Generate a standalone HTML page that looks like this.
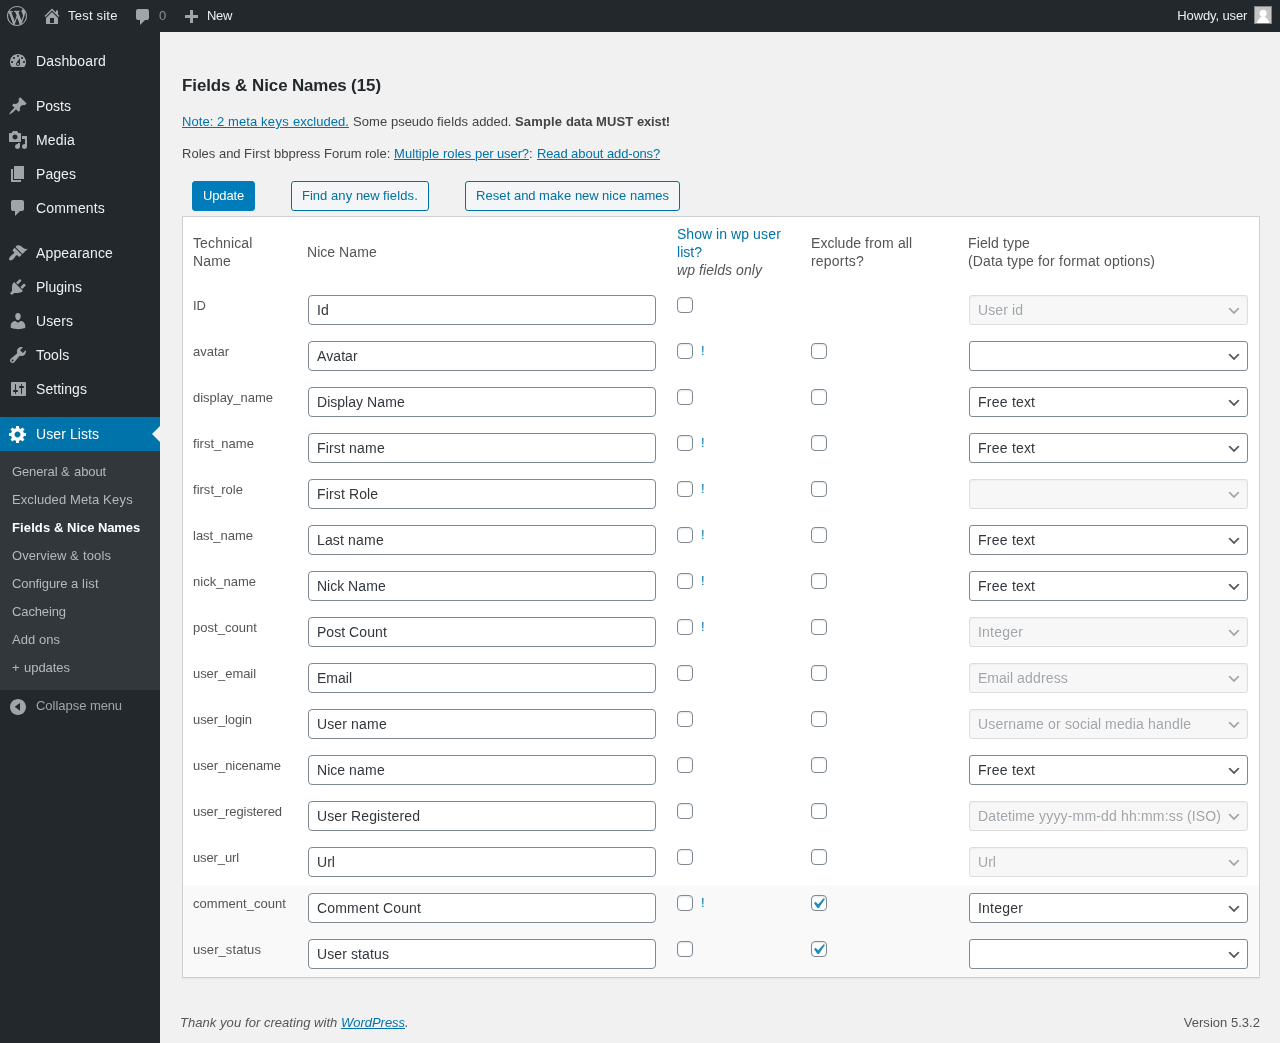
<!DOCTYPE html><html lang="en"><head><meta charset="utf-8"><title>Fields &amp; Nice Names</title><style>
*{box-sizing:border-box}
html,body{margin:0;padding:0}
body{width:1280px;height:1043px;position:relative;overflow:hidden;background:#f1f1f1;color:#444;font-family:"Liberation Sans",Arial,sans-serif;font-size:13px;line-height:1.4em}
a{color:#0073aa;text-decoration:underline}
.ico{display:block;fill:currentColor}
#bar,#menu,#content,#foot{will-change:transform}
#bar{position:absolute;left:0;top:0;width:1280px;height:32px;background:#23282d;color:#eee;font-size:13px;line-height:32px;z-index:5}
#bar .it{position:absolute;top:0;height:32px;white-space:nowrap}
#bar .ico{position:absolute;color:#a0a5aa}
#menu{position:absolute;left:0;top:32px;width:160px;height:1011px;background:#23282d}
#menu ul{list-style:none;margin:12px 0 0;padding:0}
#menu li.top{height:34px;position:relative;color:#eee;font-size:14px;line-height:18px}
#menu li.top .ico{position:absolute;left:8px;top:7px;color:#a0a5aa}
#menu li.top .nm{position:absolute;left:36px;top:8px;white-space:nowrap}
#menu li.sep{height:5px;margin:0 0 6px}
#menu li.cur{background:#0073aa;color:#fff}
#menu li.cur .ico{color:#fff}
#menu li.cur:after{content:"";position:absolute;right:0;top:9px;border:8px solid transparent;border-right-color:#f1f1f1}
#menu .sub{background:#32373c;padding:7px 0 8px;margin:0}
#menu .sub li{height:28px;padding:5px 12px;font-size:13px;line-height:18px;color:#b4b9be;white-space:nowrap}
#menu .sub li.on{color:#fff;font-weight:bold}
#collapse{position:relative;height:34px;color:#a0a5aa;font-size:13px;line-height:34px}
#collapse .ico{position:absolute;left:8px;top:7px}
#collapse>span{position:absolute;left:36px;top:-1px;white-space:nowrap}
#content{position:absolute;left:182px;top:32px;width:1078px}
h2{position:absolute;left:0;top:43px;margin:0;font-size:16.9px;line-height:22px;color:#23282d;font-weight:bold;white-space:nowrap}
p.l{position:absolute;left:0;margin:0;font-size:13px;line-height:20px;white-space:nowrap}
.btn{position:absolute;top:149px;height:30px;text-align:center;border:1px solid #0071a1;border-radius:3px;background:#f3f5f6;color:#0071a1;font-size:13px;line-height:28px;padding:0;white-space:nowrap}
.btn.pri{background:#007cba;border-color:#007cba;color:#fff}
table{position:absolute;left:0;top:184px;width:1078px;border:1px solid #ccd0d4;background:#fff;border-spacing:0;box-shadow:0 1px 1px rgba(0,0,0,.04);table-layout:fixed}
th,td{padding:8px 10px;text-align:left}
th{font-size:14px;line-height:18px;font-weight:normal;color:#555;vertical-align:middle;height:70px}
th .b{color:#0073aa}
th i{font-size:14px}
td{font-size:13px;line-height:19.5px;vertical-align:top;height:46px;color:#555}
td:first-child{padding-top:9px}
tr.alt td{background:#f9f9f9}
.inp{margin:0 1px;height:30px;width:348px;border:1px solid #7e8993;border-radius:4px;background:#fff;color:#32373c;font-size:14px;line-height:28px;padding:0 8px}
.cb{display:inline-block;vertical-align:top;width:16px;height:16px;border:1px solid #7e8993;border-radius:4px;background:#fff;box-shadow:inset 0 1px 2px rgba(0,0,0,.1);margin:2px 4px 0 0;position:relative}
.cb svg{position:absolute;left:-4px;top:-3px;width:21px;height:21px}
.bang{color:#0073aa;display:inline-block;margin-left:4px;text-decoration:none}
.sel{margin:0 1px;height:30px;width:279px;border:1px solid #7e8993;border-radius:3px;background:#fff;color:#32373c;font-size:14px;line-height:28px;padding:0 24px 0 8px;position:relative;white-space:nowrap;overflow:hidden}
.sel svg{position:absolute;right:5px;top:7px;width:16px;height:16px;fill:#555}
.sel.dis{color:#a0a5aa;border-color:#ddd;background:#f7f7f7;box-shadow:inset 0 1px 2px rgba(0,0,0,.04);text-shadow:0 1px 0 #fff}
.sel.dis svg{fill:#a0a5aa}
#foot{position:absolute;left:180px;top:1013px;width:1080px;font-size:13px;line-height:20px;color:#555}
#foot i{position:absolute;left:0;top:0}
#foot .ver{position:absolute;right:0;top:0}
</style></head><body>
<div id="bar">
<svg class="ico" style="left:7px;top:6px" viewBox="0 0 20 20" width="20" height="20"><path d="M20 10c0-5.51-4.49-10-10-10C4.48 0 0 4.49 0 10c0 5.52 4.48 10 10 10 5.51 0 10-4.48 10-10zM7.78 15.37L4.37 6.22c.55-.02 1.17-.08 1.17-.08.5-.06.44-1.13-.06-1.11 0 0-1.45.11-2.37.11-.18 0-.37 0-.58-.01C4.12 2.69 6.87 1.11 10 1.11c2.33 0 4.45.87 6.05 2.34-.68-.11-1.65.39-1.65 1.58 0 .74.45 1.36.9 2.1.35.61.55 1.36.55 2.46 0 1.49-1.4 5-1.4 5l-3.03-8.37c.54-.02.82-.17.82-.17.5-.05.44-1.25-.06-1.22 0 0-1.44.12-2.38.12-.87 0-2.33-.12-2.33-.12-.5-.03-.56 1.2-.06 1.22l.92.08 1.26 3.41zM17.41 10c.24-.64.74-1.87.43-4.25.7 1.29 1.05 2.71 1.05 4.25 0 3.29-1.73 6.24-4.4 7.78.97-2.59 1.94-5.2 2.92-7.780zM6.1 18.09C3.12 16.65 1.11 13.53 1.11 10c0-1.3.23-2.48.72-3.59C3.25 10.3 4.67 14.2 6.1 18.09zm4.03-6.63l2.58 6.98c-.86.29-1.76.45-2.71.45-.79 0-1.57-.11-2.29-.33.81-2.38 1.62-4.74 2.42-7.1z"/></svg>
<svg class="ico" style="left:42px;top:6px" viewBox="0 0 20 20" width="20" height="20"><path d="M16 8.5l1.53 1.53-1.06 1.06L10 4.62l-6.47 6.47-1.06-1.06L10 2.5l4 4v-2h2v4zm-6-2.46l6 5.99V18H4v-5.970zM12 17v-5H8v5h4z"/></svg>
<span class="it" style="left:68px"><span style="letter-spacing:0.222px">Test </span><span style="letter-spacing:0.191px">site</span></span>
<svg class="ico" style="left:133px;top:7px" viewBox="0 0 20 20" width="20" height="20"><path d="M5 2h9c1.1 0 2 .9 2 2v7c0 1.1-.9 2-2 2h-2l-5 5v-5H5c-1.1 0-2-.9-2-2V4c0-1.1.9-2 2-2z"/></svg>
<span class="it" style="letter-spacing:-0.234px;left:159px;opacity:.5">0</span>
<svg class="ico" style="left:181px;top:8px" viewBox="0 0 20 20" width="20" height="20"><path d="M17 7v3h-5v5H9v-5H4V7h5V2h3v5h5z"/></svg>
<span class="it" style="letter-spacing:-0.339px;left:207px">New</span>
<span class="it" style="letter-spacing:-0.115px;left:1177.3px">Howdy, user</span>
<svg style="position:absolute;left:1254px;top:6px" width="18" height="18" viewBox="0 0 18 18"><rect width="18" height="18" fill="#82878c"/><rect x="1" y="1" width="16" height="16" fill="#c5c5c5"/><circle cx="9.1" cy="7.3" r="3.6" fill="#fff"/><path d="M2.900 17c.9-3.800 3.100-6.300 6.200-6.300s5.300 2.500 6.200 6.300z" fill="#fff"/></svg>
</div>
<div id="menu"><ul>
<li class="top"><svg class="ico " viewBox="0 0 20 20" width="20" height="20"><path d="M3.76 16h12.48c1.1-1.37 1.76-3.11 1.76-5 0-4.42-3.58-8-8-8s-8 3.58-8 8c0 1.89.66 3.63 1.76 5zM10 4c.55 0 1 .45 1 1s-.45 1-1 1-1-.45-1-1 .45-1 1-1zM6 6c.55 0 1 .45 1 1s-.45 1-1 1-1-.45-1-1 .45-1 1-1zm8 0c.55 0 1 .45 1 1s-.45 1-1 1-1-.45-1-1 .45-1 1-1zm-5.37 5.55L12 7v6c0 1.1-.9 2-2 2s-2-.9-2-2c0-.57.24-1.08.63-1.45zM4 10c.55 0 1 .45 1 1s-.45 1-1 1-1-.45-1-1 .45-1 1-1zm12 0c.55 0 1 .45 1 1s-.45 1-1 1-1-.45-1-1 .45-1 1-1zm-5 3c0-.55-.45-1-1-1s-1 .45-1 1 .45 1 1 1 1-.45 1-1z"/></svg><span class="nm" style="letter-spacing:0.172px">Dashboard</span></li>
<li class="sep"></li>
<li class="top"><svg class="ico " viewBox="0 0 20 20" width="20" height="20"><path d="M10.44 3.02l1.82-1.82 6.36 6.35-1.83 1.82c-1.05-.68-2.48-.57-3.41.36l-.75.75c-.92.93-1.04 2.35-.35 3.41l-1.83 1.82-2.41-2.41-2.8 2.79c-.42.42-3.38 2.71-3.8 2.29s1.86-3.39 2.28-3.81l2.79-2.79L4.1 9.36l1.83-1.82c1.05.69 2.48.57 3.4-.36l.75-.75c.93-.92 1.05-2.35.36-3.41z"/></svg><span class="nm" style="letter-spacing:-0.003px">Posts</span></li>
<li class="top"><svg class="ico " viewBox="0 0 20 20" width="20" height="20"><path d="M13 11V4c0-.55-.45-1-1-1h-1.67L9 1H5L3.67 3H2c-.55 0-1 .45-1 1v7c0 .55.45 1 1 1h10c.55 0 1-.45 1-1zM7 4.5c1.38 0 2.5 1.12 2.5 2.5S8.38 9.5 7 9.5 4.5 8.38 4.5 7 5.62 4.5 7 4.5zM14 6h5v10.5c0 1.38-1.12 2.5-2.5 2.5S14 17.88 14 16.5s1.12-2.5 2.5-2.5c.17 0 .34.02.5.05V9h-3V6zm-4 8.05V13h2v3.5c0 1.38-1.12 2.5-2.5 2.5S7 17.88 7 16.5 8.12 14 9.5 14c.17 0 .34.02.5.05z"/></svg><span class="nm" style="letter-spacing:0.178px">Media</span></li>
<li class="top"><svg class="ico " viewBox="0 0 20 20" width="20" height="20"><path d="M6 15V2h10v13H6zm-1 1h8v2H3V5h2v11z"/></svg><span class="nm" style="letter-spacing:0.062px">Pages</span></li>
<li class="top"><svg class="ico " viewBox="0 0 20 20" width="20" height="20"><path d="M5 2h9c1.1 0 2 .9 2 2v7c0 1.1-.9 2-2 2h-2l-5 5v-5H5c-1.1 0-2-.9-2-2V4c0-1.1.9-2 2-2z"/></svg><span class="nm" style="letter-spacing:0.168px">Comments</span></li>
<li class="sep"></li>
<li class="top"><svg class="ico " viewBox="0 0 20 20" width="20" height="20"><path d="M14.48 11.06L7.41 3.99l1.5-1.5c.5-.56 2.3-.47 3.51.32 1.21.8 1.43 1.28 2.91 2.1 1.18.64 2.45 1.26 4.45.85zm-.71.71L6.7 4.7 4.93 6.47c-.39.39-.39 1.02 0 1.41l1.06 1.06c.39.39.39 1.03 0 1.42-.6.6-1.43 1.11-2.21 1.69-.35.26-.7.53-1.01.84C1.43 14.23.4 16.08 1.4 17.07c.99 1 2.84-.03 4.18-1.36.31-.31.58-.66.85-1.02.57-.78 1.08-1.61 1.69-2.21.39-.39 1.02-.39 1.41 0l1.06 1.06c.39.39 1.02.39 1.41 0z"/></svg><span class="nm" style="letter-spacing:0.153px">Appearance</span></li>
<li class="top"><svg class="ico " viewBox="0 0 20 20" width="20" height="20"><path d="M13.11 4.36L9.87 7.6 8 5.73l3.24-3.24c.35-.34 1.05-.2 1.56.32.52.51.66 1.21.31 1.55zm-8 1.77l.91-1.12 9.01 9.01-1.19.84c-.71.71-2.63 1.16-3.82 1.16H6.14L4.9 17.26c-.59.59-1.54.59-2.12 0-.59-.58-.59-1.53 0-2.12L4 13.9v-3.88c0-1.190.4-3.180 1.110-3.890zm7.260 3.970l3.240-3.240c.34-.35 1.040-.21 1.550.31.52.51.66 1.21.31 1.55l-3.240 3.250z"/></svg><span class="nm" style="letter-spacing:0.013px">Plugins</span></li>
<li class="top"><svg class="ico " viewBox="0 0 20 20" width="20" height="20"><path d="M10 9.25c-2.27 0-2.73-3.44-2.73-3.44C7 4.02 7.82 2 9.97 2c2.16 0 2.98 2.02 2.71 3.81 0 0-.41 3.44-2.68 3.44zm0 2.57L12.72 10c2.39 0 4.52 2.33 4.52 4.53v2.49s-3.65 1.13-7.24 1.13c-3.65 0-7.24-1.13-7.24-1.13v-2.49c0-2.25 1.94-4.48 4.47-4.48z"/></svg><span class="nm" style="letter-spacing:0.091px">Users</span></li>
<li class="top"><svg class="ico " viewBox="0 0 20 20" width="20" height="20"><path d="M16.68 9.77c-1.34 1.34-3.3 1.67-4.95.99l-5.41 6.52c-.99.99-2.59.99-3.58 0s-.99-2.59 0-3.57l6.52-5.42c-.68-1.65-.35-3.61.99-4.95 1.28-1.28 3.12-1.62 4.72-1.06l-2.89 2.89 2.82 2.82 2.86-2.87c.53 1.58.18 3.39-1.08 4.65zM3.81 16.21c.4.39 1.04.39 1.43 0 .4-.4.4-1.04 0-1.43-.39-.4-1.03-.4-1.43 0-.39.39-.39 1.03 0 1.43z"/></svg><span class="nm" style="letter-spacing:0.156px">Tools</span></li>
<li class="top"><svg class="ico " viewBox="0 0 20 20" width="20" height="20"><path d="M18 16V4c0-.55-.45-1-1-1H4c-.55 0-1 .45-1 1v12c0 .55.45 1 1 1h13c.55 0 1-.45 1-1zM8 11h1c.55 0 1 .45 1 1s-.45 1-1 1H8v1.5c0 .28-.22.5-.5.5s-.5-.22-.5-.5V13H6c-.55 0-1-.45-1-1s.45-1 1-1h1V5.500c0-.28.22-.5.5-.5s.5.22.5.5V11zm5-2h-1c-.55 0-1-.45-1-1s.45-1 1-1h1V5.500c0-.28.22-.5.5-.5s.5.22.5.5V7h1c.55 0 1 .45 1 1s-.45 1-1 1h-1v5.500c0 .28-.22.5-.5.5s-.5-.22-.5-.5V9z"/></svg><span class="nm" style="letter-spacing:0.053px">Settings</span></li>
<li class="sep"></li>
<li class="top cur"><svg class="ico " viewBox="0 0 20 20" width="20" height="20"><path d="M18 12h-2.18c-.17.7-.44 1.35-.81 1.93l1.54 1.54-2.1 2.1-1.54-1.54c-.58.36-1.23.63-1.91.79V19H8v-2.180c-.68-.16-1.33-.43-1.91-.79l-1.54 1.54-2.12-2.12 1.54-1.54c-.36-.58-.63-1.23-.79-1.91H1V9.030h2.170c.16-.7.44-1.35.8-1.94L2.430 5.550l2.100-2.100 1.540 1.540c.58-.37 1.240-.64 1.930-.81V2h3v2.180c.68.16 1.330.43 1.910.79l1.540-1.540 2.120 2.120-1.540 1.540c.36.59.64 1.240.8 1.940H18V12zm-8.500 1.500c1.660 0 3-1.340 3-3s-1.340-3-3-3-3 1.340-3 3 1.340 3 3 3z"/></svg><span class="nm"><span style="letter-spacing:0.113px">User </span><span style="letter-spacing:0.044px">Lists</span></span></li>
<li><ul class="sub">
<li><span style="letter-spacing:-0.109px">General </span><span style="letter-spacing:0.359px">&amp; </span><span style="letter-spacing:-0.109px">about</span></li>
<li><span style="letter-spacing:0.099px">Excluded </span><span style="letter-spacing:0.097px">Meta </span><span style="letter-spacing:0.273px">Keys</span></li>
<li class="on"><span style="letter-spacing:0.118px">Fields </span><span style="letter-spacing:0.000px">&amp; </span><span style="letter-spacing:-0.016px">Nice </span><span style="letter-spacing:-0.131px">Names</span></li>
<li><span style="letter-spacing:0.023px">Overview </span><span style="letter-spacing:0.359px">&amp; </span><span style="letter-spacing:0.106px">tools</span></li>
<li><span style="letter-spacing:-0.100px">Configure </span><span style="letter-spacing:0.078px">a </span><span style="letter-spacing:0.277px">list</span></li>
<li style="letter-spacing:-0.119px">Cacheing</li>
<li><span style="letter-spacing:0.062px">Add </span><span style="letter-spacing:0.010px">ons</span></li>
<li><span style="letter-spacing:0.398px">+ </span><span style="letter-spacing:-0.040px">updates</span></li>
</ul></li>
<li id="collapse"><svg class="ico " viewBox="0 0 20 20" width="20" height="20"><path d="M10 2c4.42 0 8 3.58 8 8s-3.58 8-8 8-8-3.58-8-8 3.58-8 8-8zm2 11.650V5.900L6.700 9.780z"/></svg><span><span style="letter-spacing:-0.024px">Collapse </span><span style="letter-spacing:-0.133px">menu</span></span></li>
</ul></div>
<div id="content">
<h2><span style="letter-spacing:-0.067px">Fields </span><span style="letter-spacing:0.055px">&amp; </span><span style="letter-spacing:-0.072px">Nice </span><span style="letter-spacing:-0.180px">Names </span><span style="letter-spacing:-0.008px">(15)</span></h2>
<p class="l" style="top:80px"><a><span style="letter-spacing:0.052px">Note: </span><span style="letter-spacing:0.078px">2 </span><span style="letter-spacing:0.097px">meta </span><span style="letter-spacing:0.331px">keys </span><span style="letter-spacing:0.036px">excluded.</span></a><span><span style="letter-spacing:0.391px"> </span><span style="letter-spacing:0.084px">Some </span><span style="letter-spacing:-0.040px">pseudo </span><span style="letter-spacing:0.147px">fields </span><span style="letter-spacing:-0.056px">added. </span></span><b><span style="letter-spacing:0.163px">Sample </span><span style="letter-spacing:-0.069px">data </span><span style="letter-spacing:0.113px">MUST </span><span style="letter-spacing:-0.161px">exist!</span></b></p>
<p class="l" style="top:112px"><span><span style="letter-spacing:0.023px">Roles </span><span style="letter-spacing:-0.078px">and </span><span style="letter-spacing:0.188px">First </span><span style="letter-spacing:0.016px">bbpress </span><span style="letter-spacing:-0.029px">Forum </span><span style="letter-spacing:0.016px">role: </span></span><a><span style="letter-spacing:0.064px">Multiple </span><span style="letter-spacing:0.034px">roles </span><span style="letter-spacing:-0.102px">per </span><span style="letter-spacing:-0.106px">user?</span></a><span style="letter-spacing:0.391px">: </span><a><span style="letter-spacing:-0.141px">Read </span><span style="letter-spacing:-0.026px">about </span><span style="letter-spacing:-0.154px">add-ons?</span></a></p>
<span class="btn pri" style="letter-spacing:-0.156px;left:10px;width:63px">Update</span><span class="btn" style="left:109px;width:138px"><span style="letter-spacing:0.019px">Find </span><span style="letter-spacing:0.105px">any </span><span style="letter-spacing:-0.117px">new </span><span style="letter-spacing:0.147px">fields.</span></span><span class="btn" style="left:283px;width:215px"><span style="letter-spacing:0.070px">Reset </span><span style="letter-spacing:-0.078px">and </span><span style="letter-spacing:0.119px">make </span><span style="letter-spacing:-0.117px">new </span><span style="letter-spacing:0.106px">nice </span><span style="letter-spacing:-0.006px">names</span></span>
<table><colgroup><col style="width:114px"><col style="width:370px"><col style="width:134px"><col style="width:157px"><col style="width:301px"></colgroup>
<tr><th><span style="letter-spacing:0.123px">Technical</span><br><span style="letter-spacing:0.168px">Name</span></th><th><span><span style="letter-spacing:0.022px">Nice </span><span style="letter-spacing:0.168px">Name</span></span></th><th><span class="b"><span style="letter-spacing:0.019px">Show </span><span style="letter-spacing:0.073px">in </span><span style="letter-spacing:0.073px">wp </span><span style="letter-spacing:0.195px">user</span></span><br><span class="b" style="letter-spacing:0.022px">list?</span><br><i><span style="letter-spacing:0.073px">wp </span><span style="letter-spacing:0.062px">fields </span><span style="letter-spacing:0.082px">only</span></i></th><th><span><span style="letter-spacing:0.039px">Exclude </span><span style="letter-spacing:0.225px">from </span><span style="letter-spacing:0.000px">all</span></span><br><span style="letter-spacing:0.209px">reports?</span></th><th><span><span style="letter-spacing:0.130px">Field </span><span style="letter-spacing:0.137px">type</span></span><br><span><span style="letter-spacing:0.148px">(Data </span><span style="letter-spacing:0.131px">type </span><span style="letter-spacing:0.195px">for </span><span style="letter-spacing:0.208px">format </span><span style="letter-spacing:0.152px">options)</span></span></th></tr>
<tr><td><span style="letter-spacing:0.000px">ID</span></td><td><div class="inp"><span style="letter-spacing:0.164px">Id</span></div></td><td><span class="cb"></span></td><td></td><td><div class="sel dis"><span><span style="letter-spacing:0.113px">User </span><span style="letter-spacing:0.055px">id</span></span><svg viewBox="0 0 20 20"><path d="M5 6l5 5 5-5 2 1-7 7-7-7 2-1z"/></svg></div></td></tr>
<tr><td><span style="letter-spacing:-0.023px">avatar</span></td><td><div class="inp"><span style="letter-spacing:0.091px">Avatar</span></div></td><td><span class="cb"></span><a class="bang" style="letter-spacing:0.391px">!</a></td><td><span class="cb"></span></td><td><div class="sel"><svg viewBox="0 0 20 20"><path d="M5 6l5 5 5-5 2 1-7 7-7-7 2-1z"/></svg></div></td></tr>
<tr><td><span style="letter-spacing:-0.021px">display_name</span></td><td><div class="inp"><span><span style="letter-spacing:0.027px">Display </span><span style="letter-spacing:0.168px">Name</span></span></div></td><td><span class="cb"></span></td><td><span class="cb"></span></td><td><div class="sel"><span><span style="letter-spacing:0.269px">Free </span><span style="letter-spacing:0.109px">text</span></span><svg viewBox="0 0 20 20"><path d="M5 6l5 5 5-5 2 1-7 7-7-7 2-1z"/></svg></div></td></tr>
<tr><td><span style="letter-spacing:0.030px">first_name</span></td><td><div class="inp"><span><span style="letter-spacing:0.151px">First </span><span style="letter-spacing:0.250px">name</span></span></div></td><td><span class="cb"></span><a class="bang" style="letter-spacing:0.391px">!</a></td><td><span class="cb"></span></td><td><div class="sel"><span><span style="letter-spacing:0.269px">Free </span><span style="letter-spacing:0.109px">text</span></span><svg viewBox="0 0 20 20"><path d="M5 6l5 5 5-5 2 1-7 7-7-7 2-1z"/></svg></div></td></tr>
<tr><td><span style="letter-spacing:0.014px">first_role</span></td><td><div class="inp"><span><span style="letter-spacing:0.151px">First </span><span style="letter-spacing:0.055px">Role</span></span></div></td><td><span class="cb"></span><a class="bang" style="letter-spacing:0.391px">!</a></td><td><span class="cb"></span></td><td><div class="sel dis"><svg viewBox="0 0 20 20"><path d="M5 6l5 5 5-5 2 1-7 7-7-7 2-1z"/></svg></div></td></tr>
<tr><td><span style="letter-spacing:0.000px">last_name</span></td><td><div class="inp"><span><span style="letter-spacing:0.131px">Last </span><span style="letter-spacing:0.250px">name</span></span></div></td><td><span class="cb"></span><a class="bang" style="letter-spacing:0.391px">!</a></td><td><span class="cb"></span></td><td><div class="sel"><span><span style="letter-spacing:0.269px">Free </span><span style="letter-spacing:0.109px">text</span></span><svg viewBox="0 0 20 20"><path d="M5 6l5 5 5-5 2 1-7 7-7-7 2-1z"/></svg></div></td></tr>
<tr><td><span style="letter-spacing:0.012px">nick_name</span></td><td><div class="inp"><span><span style="letter-spacing:-0.022px">Nick </span><span style="letter-spacing:0.168px">Name</span></span></div></td><td><span class="cb"></span><a class="bang" style="letter-spacing:0.391px">!</a></td><td><span class="cb"></span></td><td><div class="sel"><span><span style="letter-spacing:0.269px">Free </span><span style="letter-spacing:0.109px">text</span></span><svg viewBox="0 0 20 20"><path d="M5 6l5 5 5-5 2 1-7 7-7-7 2-1z"/></svg></div></td></tr>
<tr><td><span style="letter-spacing:0.037px">post_count</span></td><td><div class="inp"><span><span style="letter-spacing:0.019px">Post </span><span style="letter-spacing:0.131px">Count</span></span></div></td><td><span class="cb"></span><a class="bang" style="letter-spacing:0.391px">!</a></td><td><span class="cb"></span></td><td><div class="sel dis"><span style="letter-spacing:0.205px">Integer</span><svg viewBox="0 0 20 20"><path d="M5 6l5 5 5-5 2 1-7 7-7-7 2-1z"/></svg></div></td></tr>
<tr><td><span style="letter-spacing:-0.061px">user_email</span></td><td><div class="inp"><span style="letter-spacing:0.000px">Email</span></div></td><td><span class="cb"></span></td><td><span class="cb"></span></td><td><div class="sel dis"><span><span style="letter-spacing:0.018px">Email </span><span style="letter-spacing:0.174px">address</span></span><svg viewBox="0 0 20 20"><path d="M5 6l5 5 5-5 2 1-7 7-7-7 2-1z"/></svg></div></td></tr>
<tr><td><span style="letter-spacing:-0.102px">user_login</span></td><td><div class="inp"><span><span style="letter-spacing:0.113px">User </span><span style="letter-spacing:0.250px">name</span></span></div></td><td><span class="cb"></span></td><td><span class="cb"></span></td><td><div class="sel dis"><span><span style="letter-spacing:0.174px">Username </span><span style="letter-spacing:0.224px">or </span><span style="letter-spacing:0.047px">social </span><span style="letter-spacing:0.167px">media </span><span style="letter-spacing:0.164px">handle</span></span><svg viewBox="0 0 20 20"><path d="M5 6l5 5 5-5 2 1-7 7-7-7 2-1z"/></svg></div></td></tr>
<tr><td><span style="letter-spacing:-0.071px">user_nicename</span></td><td><div class="inp"><span><span style="letter-spacing:0.022px">Nice </span><span style="letter-spacing:0.250px">name</span></span></div></td><td><span class="cb"></span></td><td><span class="cb"></span></td><td><div class="sel"><span><span style="letter-spacing:0.269px">Free </span><span style="letter-spacing:0.109px">text</span></span><svg viewBox="0 0 20 20"><path d="M5 6l5 5 5-5 2 1-7 7-7-7 2-1z"/></svg></div></td></tr>
<tr><td><span style="letter-spacing:-0.091px">user_registered</span></td><td><div class="inp"><span><span style="letter-spacing:0.113px">User </span><span style="letter-spacing:0.133px">Registered</span></span></div></td><td><span class="cb"></span></td><td><span class="cb"></span></td><td><div class="sel dis"><span><span style="letter-spacing:0.123px">Datetime </span><span style="letter-spacing:0.175px">yyyy-mm-dd </span><span style="letter-spacing:0.161px">hh:mm:ss </span><span style="letter-spacing:0.113px">(ISO)</span></span><svg viewBox="0 0 20 20"><path d="M5 6l5 5 5-5 2 1-7 7-7-7 2-1z"/></svg></div></td></tr>
<tr><td><span style="letter-spacing:-0.123px">user_url</span></td><td><div class="inp"><span style="letter-spacing:0.042px">Url</span></div></td><td><span class="cb"></span></td><td><span class="cb"></span></td><td><div class="sel dis"><span style="letter-spacing:0.042px">Url</span><svg viewBox="0 0 20 20"><path d="M5 6l5 5 5-5 2 1-7 7-7-7 2-1z"/></svg></div></td></tr>
<tr class="alt"><td><span style="letter-spacing:0.037px">comment_count</span></td><td><div class="inp"><span><span style="letter-spacing:0.182px">Comment </span><span style="letter-spacing:0.131px">Count</span></span></div></td><td><span class="cb"></span><a class="bang" style="letter-spacing:0.391px">!</a></td><td><span class="cb"><svg viewBox="0 0 20 20"><path d="M14.83 4.89l1.34.94-5.81 8.38H9.02L5.78 9.67l1.34-1.25 2.57 2.4z" fill="#1e8cbe"/></svg></span></td><td><div class="sel"><span style="letter-spacing:0.205px">Integer</span><svg viewBox="0 0 20 20"><path d="M5 6l5 5 5-5 2 1-7 7-7-7 2-1z"/></svg></div></td></tr>
<tr class="alt"><td><span style="letter-spacing:0.071px">user_status</span></td><td><div class="inp"><span><span style="letter-spacing:0.113px">User </span><span style="letter-spacing:0.109px">status</span></span></div></td><td><span class="cb"></span></td><td><span class="cb"><svg viewBox="0 0 20 20"><path d="M14.83 4.89l1.34.94-5.81 8.38H9.02L5.78 9.67l1.34-1.25 2.57 2.4z" fill="#1e8cbe"/></svg></span></td><td><div class="sel"><svg viewBox="0 0 20 20"><path d="M5 6l5 5 5-5 2 1-7 7-7-7 2-1z"/></svg></div></td></tr>
</table></div>
<div id="foot"><i><span><span style="letter-spacing:0.042px">Thank </span><span style="letter-spacing:0.105px">you </span><span style="letter-spacing:0.055px">for </span><span style="letter-spacing:0.014px">creating </span><span style="letter-spacing:0.053px">with </span></span><a style="letter-spacing:-0.033px">WordPress</a><span style="letter-spacing:0.391px">.</span></i><span class="ver"><span style="letter-spacing:0.037px">Version </span><span style="letter-spacing:0.016px">5.3.2</span></span></div>
</body></html>
